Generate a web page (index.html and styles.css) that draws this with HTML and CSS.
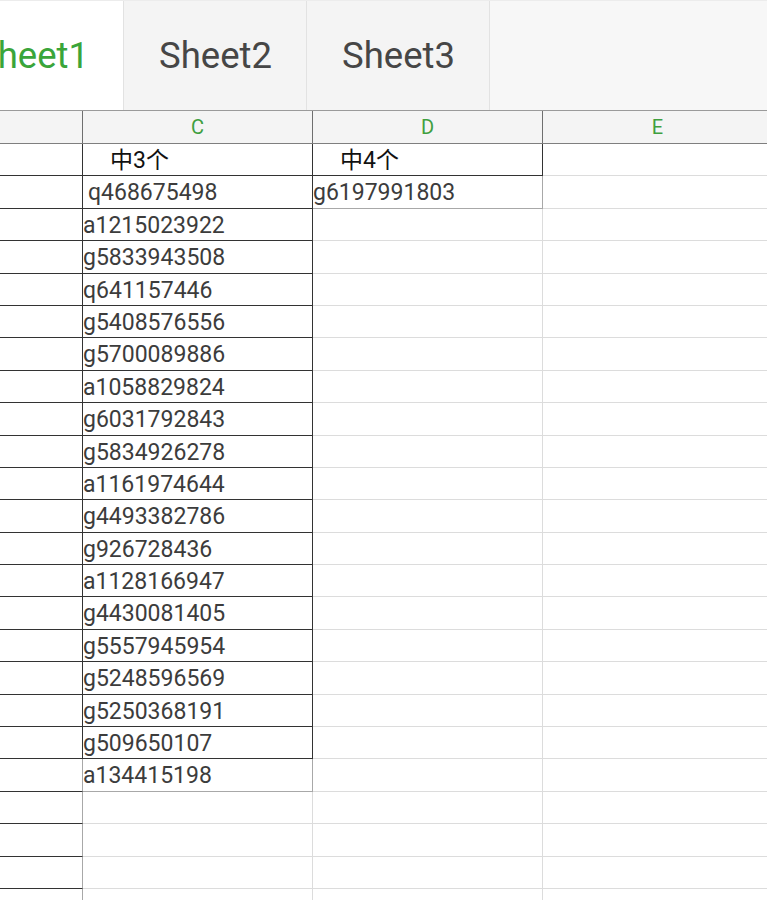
FILE: index.html
```html
<!DOCTYPE html>
<html lang="zh">
<head>
<meta charset="utf-8">
<title>Sheet</title>
<link rel="stylesheet" href="styles.css">
</head>
<body>
<div class="app">
  <div class="tabs">
    <div class="tab active">Sheet1</div>
    <div class="tab">Sheet2</div>
    <div class="tab">Sheet3</div>
    <div class="tab-rest"></div>
  </div>
  <div class="grid">
    <div class="row head">
      <div class="cell b hd-dark"></div>
      <div class="cell c hd-dark">C</div>
      <div class="cell d hd-dark">D</div>
      <div class="cell e">E</div>
    </div>
    <div class="row">
      <div class="cell b dk-b dk-r"></div>
      <div class="cell c dk-b dk-r"><span class="indent">中3个</span></div>
      <div class="cell d dk-b dk-r"><span class="indent">中4个</span></div>
      <div class="cell e"></div>
    </div>
    <div class="row">
      <div class="cell b dk-b dk-r"></div>
      <div class="cell c dk-b dk-r"><span class="small-indent">q468675498</span></div>
      <div class="cell d md-b md-r">g6197991803</div>
      <div class="cell e"></div>
    </div>
    <div class="row"><div class="cell b dk-b dk-r"></div><div class="cell c dk-b dk-r">a1215023922</div><div class="cell d"></div><div class="cell e"></div></div>
    <div class="row"><div class="cell b dk-b dk-r"></div><div class="cell c dk-b dk-r">g5833943508</div><div class="cell d"></div><div class="cell e"></div></div>
    <div class="row"><div class="cell b dk-b dk-r"></div><div class="cell c dk-b dk-r">q641157446</div><div class="cell d"></div><div class="cell e"></div></div>
    <div class="row"><div class="cell b dk-b dk-r"></div><div class="cell c dk-b dk-r">g5408576556</div><div class="cell d"></div><div class="cell e"></div></div>
    <div class="row"><div class="cell b dk-b dk-r"></div><div class="cell c dk-b dk-r">g5700089886</div><div class="cell d"></div><div class="cell e"></div></div>
    <div class="row"><div class="cell b dk-b dk-r"></div><div class="cell c dk-b dk-r">a1058829824</div><div class="cell d"></div><div class="cell e"></div></div>
    <div class="row"><div class="cell b dk-b dk-r"></div><div class="cell c dk-b dk-r">g6031792843</div><div class="cell d"></div><div class="cell e"></div></div>
    <div class="row"><div class="cell b dk-b dk-r"></div><div class="cell c dk-b dk-r">g5834926278</div><div class="cell d"></div><div class="cell e"></div></div>
    <div class="row"><div class="cell b dk-b dk-r"></div><div class="cell c dk-b dk-r">a1161974644</div><div class="cell d"></div><div class="cell e"></div></div>
    <div class="row"><div class="cell b dk-b dk-r"></div><div class="cell c dk-b dk-r">g4493382786</div><div class="cell d"></div><div class="cell e"></div></div>
    <div class="row"><div class="cell b dk-b dk-r"></div><div class="cell c dk-b dk-r">g926728436</div><div class="cell d"></div><div class="cell e"></div></div>
    <div class="row"><div class="cell b dk-b dk-r"></div><div class="cell c dk-b dk-r">a1128166947</div><div class="cell d"></div><div class="cell e"></div></div>
    <div class="row"><div class="cell b dk-b dk-r"></div><div class="cell c dk-b dk-r">g4430081405</div><div class="cell d"></div><div class="cell e"></div></div>
    <div class="row"><div class="cell b dk-b dk-r"></div><div class="cell c dk-b dk-r">g5557945954</div><div class="cell d"></div><div class="cell e"></div></div>
    <div class="row"><div class="cell b dk-b dk-r"></div><div class="cell c dk-b dk-r">g5248596569</div><div class="cell d"></div><div class="cell e"></div></div>
    <div class="row"><div class="cell b dk-b dk-r"></div><div class="cell c dk-b dk-r">g5250368191</div><div class="cell d"></div><div class="cell e"></div></div>
    <div class="row"><div class="cell b dk-b dk-r"></div><div class="cell c dk-b dk-r">g509650107</div><div class="cell d"></div><div class="cell e"></div></div>
    <div class="row"><div class="cell b dk-b md-r"></div><div class="cell c md-b md-r">a134415198</div><div class="cell d"></div><div class="cell e"></div></div>
    <div class="row"><div class="cell b dk-b md-r"></div><div class="cell c"></div><div class="cell d"></div><div class="cell e"></div></div>
    <div class="row"><div class="cell b dk-b md-r"></div><div class="cell c"></div><div class="cell d"></div><div class="cell e"></div></div>
    <div class="row"><div class="cell b dk-b md-r"></div><div class="cell c"></div><div class="cell d"></div><div class="cell e"></div></div>
    <div class="row"><div class="cell b dk-b md-r"></div><div class="cell c"></div><div class="cell d"></div><div class="cell e"></div></div>
  </div>
</div>
</body>
</html>
```

FILE: styles.css
```css
html, body {
  margin: 0;
  padding: 0;
  background: #ffffff;
}

body {
  font-family: Roboto, "Noto Sans CJK SC", sans-serif;
  overflow: hidden;
  width: 767px;
  height: 900px;
}

.app {
  width: 767px;
  height: 900px;
  overflow: hidden;
}

.tabs {
  display: flex;
  border-top: 1px solid #ececec;
  border-bottom: 1px solid #9a9a9a;
  box-sizing: border-box;
  height: 111px;
  background: #f7f7f7;
}

.tab {
  flex: 0 0 183px;
  display: flex;
  align-items: center;
  justify-content: center;
  font-size: 36.5px;
  color: #464646;
  background: #f4f4f4;
  border-right: 1px solid #e2e2e2;
  box-sizing: border-box;
  padding-left: 1px;
}

.tab.active {
  margin-left: -59px;
  background: #ffffff;
  color: #3aa53a;
}

.tab-rest {
  flex: 1;
  background: #f7f7f7;
}

.grid {
  display: flex;
  flex-direction: column;
}

.row {
  display: flex;
  height: 32.4px;
  flex: 0 0 auto;
}

.row.head {
  height: 32px;
  background: #f4f4f4;
  border-bottom: 1px solid #7f7f7f;
}

.cell {
  box-sizing: border-box;
  height: 100%;
  border-right: 1px solid #dcdcdc;
  border-bottom: 1px solid #dcdcdc;
  font-size: 23px;
  color: #3c3c3c;
  white-space: nowrap;
  overflow: hidden;
  line-height: 30px;
  padding-top: 2px;
}

.b { flex: 0 0 83px; }
.c { flex: 0 0 230px; }
.d { flex: 0 0 230px; }
.e { flex: 0 0 230px; }

.head .cell {
  border-bottom: none;
  text-align: center;
  color: #3f9f3f;
  font-size: 20px;
  line-height: 32px;
  padding-top: 0;
  border-right-color: #d0d0d0;
}

.head .hd-dark {
  border-right-color: #6f6f6f;
}

.dk-b { border-bottom-color: #333333; }
.dk-r { border-right-color: #333333; }
.md-b { border-bottom-color: #a8a8a8; }
.md-r { border-right-color: #a8a8a8; }

.indent {
  padding-left: 27px;
  color: #111111;
}

.small-indent {
  padding-left: 5px;
}
```
